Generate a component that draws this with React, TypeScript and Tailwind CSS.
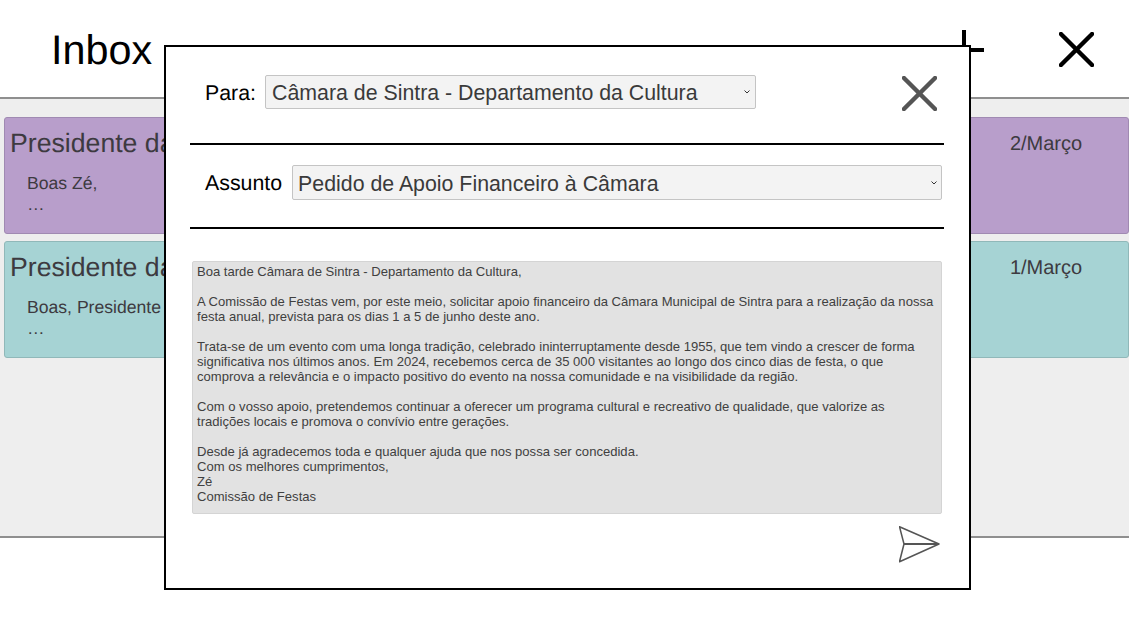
import React from 'react';

const mailBody = `Boa tarde Câmara de Sintra - Departamento da Cultura,

A Comissão de Festas vem, por este meio, solicitar apoio financeiro da Câmara Municipal de Sintra para a realização da nossa festa anual, prevista para os dias 1 a 5 de junho deste ano.

Trata-se de um evento com uma longa tradição, celebrado ininterruptamente desde 1955, que tem vindo a crescer de forma significativa nos últimos anos. Em 2024, recebemos cerca de 35 000 visitantes ao longo dos cinco dias de festa, o que comprova a relevância e o impacto positivo do evento na nossa comunidade e na visibilidade da região.

Com o vosso apoio, pretendemos continuar a oferecer um programa cultural e recreativo de qualidade, que valorize as tradições locais e promova o convívio entre gerações.

Desde já agradecemos toda e qualquer ajuda que nos possa ser concedida.
Com os melhores cumprimentos,
Zé
Comissão de Festas`;

const messages = [
  { from: 'Presidente da Junta', preview: 'Boas Zé,', date: '2/Março', color: 'bg-[#b89ecb] border-[#a08ab2]' },
  { from: 'Presidente da Câmara', preview: 'Boas, Presidente', date: '1/Março', color: 'bg-[#a6d3d4] border-[#90b8b9]' },
];

const CloseIcon = ({ className }: { className: string }) => (
  <svg viewBox="0 0 36 36" className={className} fill="none" stroke="currentColor" strokeWidth="4.5" strokeLinecap="round">
    <path d="M2 2 L34 34 M34 2 L2 34" />
  </svg>
);

const Chevron = ({ className }: { className: string }) => (
  <svg viewBox="0 0 6 4" className={className} fill="none" stroke="#333333" strokeWidth="1">
    <path d="M0.5 0.5 L3 3 L5.5 0.5" />
  </svg>
);

const App: React.FC = () => {
  return (
    <div className="relative h-[629px] w-[1129px] overflow-hidden bg-white font-['Liberation_Sans',sans-serif] [text-rendering:geometricPrecision]">
      {/* Header */}
      <header className="flex h-[99px] items-center justify-between border-b-2 border-[#8f8f8f] pl-[51px] pr-[35px] pt-[2px]">
        <h1 className="pt-[2px] text-[41.33px] leading-none text-black">Inbox</h1>
        <div className="flex items-center gap-[75px]">
          <svg viewBox="0 0 40 40" className="h-10 w-10 text-black" fill="none" stroke="currentColor" strokeWidth="4">
            <path d="M20 0 V40 M0 20 H40" />
          </svg>
          <CloseIcon className="h-[35px] w-[35px] text-black" />
        </div>
      </header>

      {/* Message list */}
      <main className="flex h-[439px] flex-col gap-[7px] border-b-2 border-[#8f8f8f] bg-[#eeeeee] pl-1 pt-[18px]">
        {messages.map((m) => (
          <div key={m.date} className={`flex h-[117px] rounded-[3px] border pl-[5px] pt-[9px] text-[#3d3a40] ${m.color}`}>
            <div className="w-[961px]">
              <p className="text-[26.67px] leading-8">{m.from}</p>
              <p className="pl-[17px] pt-[14px] text-[17.6px] leading-[21px]">{m.preview}</p>
              <p className="pl-[17px] text-[17.6px] leading-[21px]">…</p>
            </div>
            <p className="w-[150px] pt-[5px] text-center text-[20px] leading-6">{m.date}</p>
          </div>
        ))}
      </main>

      {/* Compose dialog */}
      <div className="absolute left-[164px] top-[45px] h-[545px] w-[807px] border-2 border-black bg-white pl-[24px] pr-[25px]">
        <div className="flex h-[98px] items-center border-b-2 border-black pb-[6px] pl-[15px]">
          <label className="mr-[9px] pt-[3px] text-[21.33px] text-black">Para:</label>
          <div className="relative w-[491px]">
            <select defaultValue="a" className="block h-[34px] w-full appearance-none rounded-[2px] border border-[#c4c4c4] bg-[#f3f3f3] pl-[6px] pt-[2px] text-[21.33px] text-[#3a3a3a]">
              <option value="a">Câmara de Sintra - Departamento da Cultura</option>
            </select>
            <Chevron className="absolute right-[6px] top-[15px] h-1 w-[6px]" />
          </div>
          <CloseIcon className="ml-auto mr-[7px] mt-[2px] h-[35px] w-[35px] text-[#555555]" />
        </div>
        <div className="flex h-[84px] items-center border-b-2 border-black pb-[7px] pl-[15px]">
          <label className="mr-[10px] pt-[3px] text-[21.33px] text-black">Assunto</label>
          <div className="relative w-[650px]">
            <select defaultValue="a" className="block h-[35px] w-full appearance-none rounded-[2px] border border-[#c4c4c4] bg-[#f3f3f3] pl-[5px] pt-[3px] text-[21.33px] text-[#3a3a3a]">
              <option value="a">Pedido de Apoio Financeiro à Câmara</option>
            </select>
            <Chevron className="absolute right-[5px] top-[16px] h-1 w-[6px]" />
          </div>
        </div>
        <textarea
          readOnly
          defaultValue={mailBody}
          className="ml-[2px] mt-[32px] block h-[253px] w-[750px] resize-none rounded-[2px] border border-[#d4d4d4] bg-[#e2e2e2] px-[4px] pt-[2px] text-[13.07px] leading-[15px] text-[#404040]"
        />
        <div className="mr-[3px] mt-[12px] flex justify-end">
          <svg viewBox="0 0 42 38" className="h-[38px] w-[42px] text-[#555555]" fill="none" stroke="currentColor" strokeWidth="1.5" strokeLinejoin="round">
            <path d="M0.5 0.7 L40 18 L0.5 35.7 L5 18 Z" />
            <path d="M5 18 H40" strokeWidth="2" />
          </svg>
        </div>
      </div>
    </div>
  );
};

export default App;
